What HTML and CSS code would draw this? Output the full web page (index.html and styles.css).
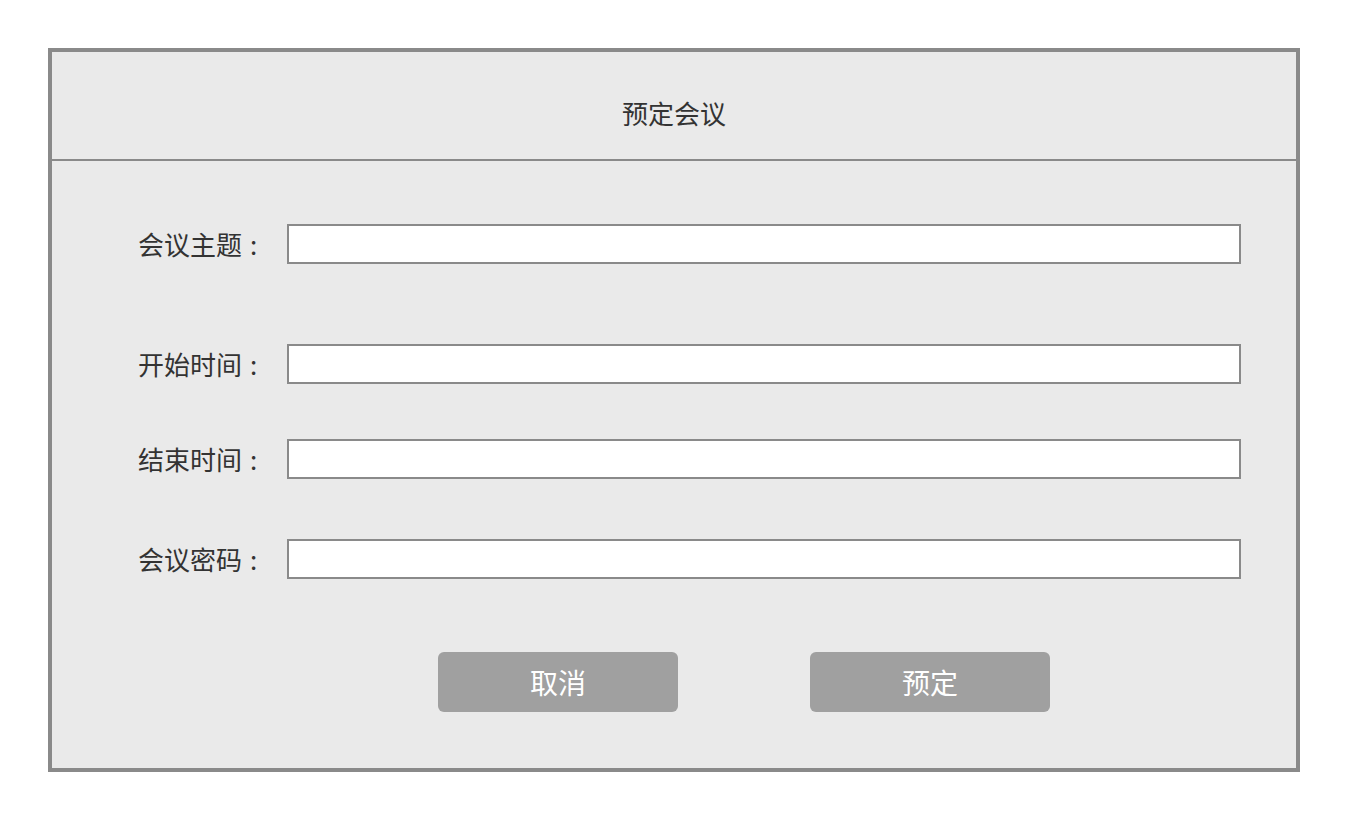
FILE: index.html
```html
<!DOCTYPE html>
<html lang="zh-CN">
<head>
<meta charset="utf-8">
<title>预定会议</title>
<link rel="stylesheet" href="styles.css">
</head>
<body>
<div class="dialog">
  <div class="dialog-header">预定会议</div>
  <div class="dialog-body">
    <div class="row row-1">
      <label class="label">会议主题<span class="colon">:</span></label>
      <input class="field" type="text">
    </div>
    <div class="row row-2">
      <label class="label">开始时间<span class="colon">:</span></label>
      <input class="field" type="text">
    </div>
    <div class="row row-3">
      <label class="label">结束时间<span class="colon">:</span></label>
      <input class="field" type="text">
    </div>
    <div class="row row-4">
      <label class="label">会议密码<span class="colon">:</span></label>
      <input class="field" type="text">
    </div>
    <div class="actions">
      <button class="btn" type="button">取消</button>
      <button class="btn" type="button">预定</button>
    </div>
  </div>
</div>
</body>
</html>
```

FILE: styles.css
```css
html, body {
  margin: 0;
  padding: 0;
  background: #ffffff;
}
body {
  padding: 48px;
  font-family: "Noto Sans CJK SC", "Noto Sans", sans-serif;
  color: #333333;
}
.dialog {
  box-sizing: border-box;
  width: 1252px;
  height: 724px;
  border: 4px solid #8a8a8a;
  background: #eaeaea;
}
.dialog-header {
  box-sizing: border-box;
  height: 109px;
  border-bottom: 2px solid #8a8a8a;
  text-align: center;
  font-size: 26px;
  line-height: 30px;
  padding-top: 46px;
  color: #333333;
}
.dialog-body {
  padding-left: 86px;
  padding-top: 63px;
}
.row {
  display: flex;
  align-items: center;
  height: 40px;
}
.row-2 { margin-top: 80px; }
.row-3 { margin-top: 55px; }
.row-4 { margin-top: 60px; }
.label {
  width: 149px;
  font-size: 26px;
  line-height: 40px;
  color: #333333;
  white-space: nowrap;
}
.colon {
  display: inline-block;
  margin-left: 8px;
}
.field {
  box-sizing: border-box;
  width: 954px;
  height: 40px;
  margin: 0;
  border: 2px solid #8a8a8a;
  background: #ffffff;
  outline: none;
  padding: 0 8px;
  font-family: inherit;
  font-size: 20px;
}
.actions {
  display: flex;
  gap: 132px;
  margin-top: 73px;
  padding-left: 300px;
}
.btn {
  width: 240px;
  height: 60px;
  border: none;
  border-radius: 6px;
  background: #a0a0a0;
  color: #ffffff;
  font-family: inherit;
  font-size: 28px;
  line-height: 60px;
  padding: 0;
  cursor: pointer;
}
```
